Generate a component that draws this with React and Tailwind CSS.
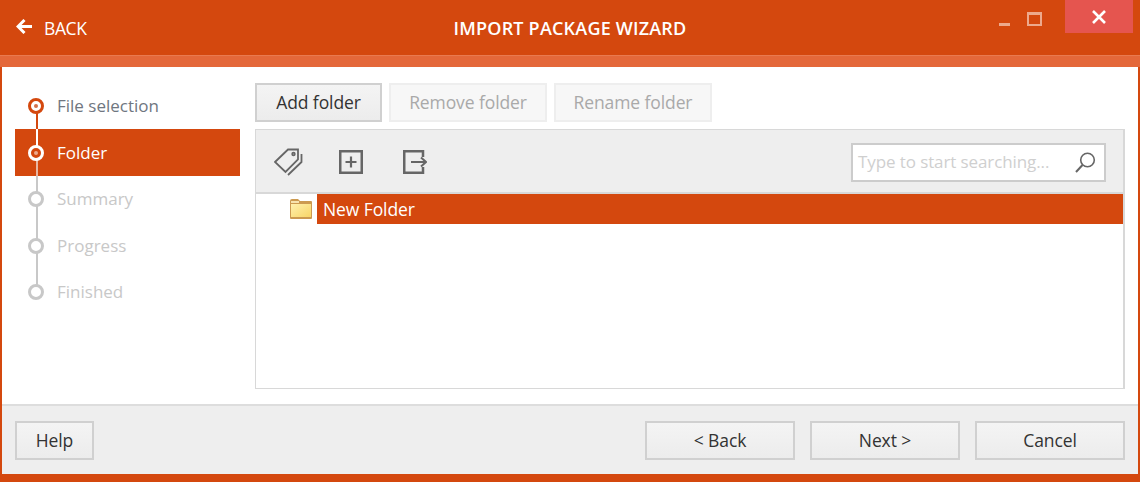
import React from 'react';

const font = "font-['Open_Sans',sans-serif]";

function Step({ label, state, top, bottom, tall }) {
  const active = state === 'active';
  const done = state === 'done';
  const todo = state === 'todo';
  return (
    <div className={`relative flex items-center pl-[42px] ${tall ? 'h-[47px]' : 'h-[46px]'} ${active ? 'bg-[#d4480e] text-white' : ''} ${done ? 'text-[#6f7680]' : ''} ${todo ? 'text-[#c8c8c8]' : ''}`}>
      {top && <span className={`absolute left-[21px] top-0 h-1/2 w-[2px] ${top}`} />}
      {bottom && <span className={`absolute left-[21px] bottom-0 h-1/2 w-[2px] ${bottom}`} />}
      <span className={`absolute left-[13px] ${tall ? 'top-[16px]' : 'top-[15px]'} w-[16px] h-[16px] rounded-full border-[3px] flex items-center justify-center ${active ? 'border-white bg-[#d4480e]' : ''} ${done ? 'border-[#d4480e] bg-white' : ''} ${todo ? 'border-[#c8c8c8] bg-white' : ''}`}>
        {!todo && <span className={`w-[4px] h-[4px] rounded-full ${active ? 'bg-[#eda98c]' : 'bg-[#d4704a]'}`} />}
      </span>
      <span className="text-[17px]">{label}</span>
    </div>
  );
}

function Btn({ children, className = '', disabled }) {
  return (
    <button className={`h-[39px] flex items-center justify-center border-2 text-[17.5px] tracking-[-0.1px] ${disabled ? 'border-[#eeeeee] bg-[#f7f7f7] text-[#a9a9a9]' : 'border-[#d0d0d0] bg-gradient-to-b from-[#f4f4f4] to-[#ececec] text-[#333333]'} ${className}`}>
      {children}
    </button>
  );
}

function TagsIcon() {
  return (
    <svg width="30" height="28" viewBox="0 0 30 28" fill="none" stroke="#666666" strokeWidth="1.8">
      <path d="M1 14 L14 1.5 H24 V11.5 L11.5 24 Z" />
      <circle cx="19.5" cy="6" r="1.3" />
      <path d="M27.5 6 V14 L14 27" />
    </svg>
  );
}

function AddIcon() {
  return (
    <svg width="24" height="24" viewBox="0 0 24 24" fill="none" stroke="#666666">
      <rect x="1.25" y="1.25" width="21.5" height="21.5" strokeWidth="2.5" />
      <path d="M12 6.5 V17.5 M6.5 12 H17.5" strokeWidth="2.2" />
    </svg>
  );
}

function ExportIcon() {
  return (
    <svg width="24" height="24" viewBox="0 0 24 24" fill="none" stroke="#666666" strokeWidth="2.5">
      <path d="M20 7 V1.25 H1.25 V22.75 H20 V17" />
      <path d="M8 12 H23 M18 7.5 L23 12 L18 16.5" strokeWidth="2" />
    </svg>
  );
}

function SearchIcon() {
  return (
    <svg width="21" height="21" viewBox="0 0 21 21" fill="none" stroke="#666666" strokeWidth="1.6">
      <circle cx="12.5" cy="8" r="6.8" />
      <path d="M7.5 13 L1 20" strokeWidth="2" />
    </svg>
  );
}

function FolderIcon() {
  return (
    <svg width="22" height="20" viewBox="0 0 22 20">
      <defs>
        <linearGradient id="folderFill" x1="0" y1="0" x2="1" y2="1">
          <stop offset="0" stopColor="#fff0ad" />
          <stop offset="1" stopColor="#f7d567" />
        </linearGradient>
      </defs>
      <path d="M0 2 Q0 0 2 0 H8 L10 2 H21 Q22 2 22 3 V19 Q22 20 21 20 H1 Q0 20 0 19 Z" fill="#cc9a50" />
      <rect x="1" y="5" width="20" height="13" fill="url(#folderFill)" />
      <rect x="1" y="2" width="8" height="2" fill="#f7e3ae" />
    </svg>
  );
}

export default function App() {
  return (
    <div className={`${font} w-[1140px] h-[482px] flex flex-col overflow-hidden bg-[#d4480e]`}>
      {/* Title bar */}
      <div className="h-[55px] shrink-0 grid grid-cols-3 text-white">
        <div className="flex items-start pl-[16px] pt-[19px]">
          <svg width="17" height="15" viewBox="0 0 17 15" fill="none" stroke="white" strokeWidth="3">
            <path d="M16 7.5 H3 M8.5 1 L2 7.5 L8.5 14" />
          </svg>
          <span className="ml-[11px] -mt-[1px] text-[17.5px] leading-[20px] tracking-[-0.4px]">BACK</span>
        </div>
        <div className="text-center pt-[18px] text-[18px] leading-[20px] font-semibold tracking-[0.2px] whitespace-nowrap">IMPORT PACKAGE WIZARD</div>
        <div className="flex items-start justify-end pr-[7px]">
          <span className="mt-[23px] mr-[17px] w-[11px] h-[3px] bg-[#eda98c]" />
          <span className="mt-[12px] mr-[23px] w-[15px] h-[14px] border-2 border-t-[3px] border-[#eda98c]" />
          <button className="w-[68px] h-[33px] bg-[#e5554f] flex items-center justify-center">
            <svg width="14" height="14" viewBox="0 0 14 14" stroke="white" strokeWidth="2.6">
              <path d="M1 1 L13 13 M13 1 L1 13" />
            </svg>
          </button>
        </div>
      </div>

      {/* Strip */}
      <div className="h-[12px] shrink-0 bg-[#e4683a] border-t border-[#e97a50]" />

      {/* Body */}
      <div className="flex-1 flex flex-col mx-[2px] bg-white min-h-0">
        <div className="flex-1 flex pl-[13px] pr-[13px] pt-[16px] pb-[15px] min-h-0">
          <div className="w-[225px] shrink-0 flex flex-col">
            <Step label="File selection" state="done" bottom="bg-[#d4480e]" />
            <Step label="Folder" state="active" tall top="bg-white" bottom="bg-[#e8b7a2]" />
            <Step label="Summary" state="todo" top="bg-[#c8c8c8]" bottom="bg-[#c8c8c8]" />
            <Step label="Progress" state="todo" tall top="bg-[#c8c8c8]" bottom="bg-[#c8c8c8]" />
            <Step label="Finished" state="todo" top="bg-[#c8c8c8]" />
          </div>

          <div className="flex-1 ml-[15px] flex flex-col min-w-0">
            <div className="flex gap-[7px] shrink-0">
              <Btn className="w-[127px]">Add folder</Btn>
              <Btn disabled className="w-[158px]">Remove folder</Btn>
              <Btn disabled className="w-[158px]">Rename folder</Btn>
            </div>
            <div className="mt-[7px] flex-1 border-y border-l border-r-2 border-[#d8d8d8] flex flex-col min-h-0">
              <div className="h-[64px] shrink-0 bg-[#eeeeee] border-b-2 border-[#d8d8d8] flex items-center pt-[2px] pl-[18px] pr-[17px]">
                <TagsIcon />
                <span className="ml-[35px]"><AddIcon /></span>
                <span className="ml-[40px]"><ExportIcon /></span>
                <div className="ml-auto w-[255px] h-[39px] bg-white border-2 border-[#cccccc] flex items-center pl-[5px] pr-[8px]">
                  <span className="text-[17px] tracking-[-0.1px] text-[#cfcfcf] whitespace-nowrap">Type to start searching...</span>
                  <span className="ml-auto"><SearchIcon /></span>
                </div>
              </div>
              <div className="flex-1 bg-white">
                <div className="flex items-start pl-[34px]">
                  <span className="mt-[5px] w-[27px] shrink-0"><FolderIcon /></span>
                  <div className="flex-1 h-[30px] bg-[#d4480e] text-white flex items-center pl-[6px] text-[17.5px] tracking-[-0.1px]">New Folder</div>
                </div>
              </div>
            </div>
          </div>
        </div>

        {/* Footer */}
        <div className="h-[70px] shrink-0 bg-[#eeeeee] border-t-2 border-[#dddddd] flex items-center pl-[13px] pr-[13px] pt-[1px]">
          <Btn className="w-[79px]">Help</Btn>
          <div className="ml-auto flex gap-[15px]">
            <Btn className="w-[150px]">&lt; Back</Btn>
            <Btn className="w-[150px]">Next &gt;</Btn>
            <Btn className="w-[150px]">Cancel</Btn>
          </div>
        </div>
      </div>
      <div className="h-[8px] shrink-0" />
    </div>
  );
}
